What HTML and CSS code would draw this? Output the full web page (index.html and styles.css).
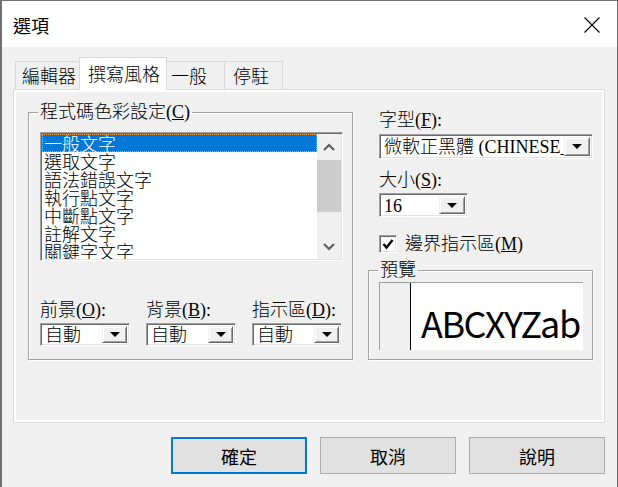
FILE: index.html
```html
<!DOCTYPE html>
<html lang="zh-Hant">
<head>
<meta charset="utf-8">
<title>選項</title>
<link rel="stylesheet" href="styles.css">
</head>
<body>
<div class="window">
  <div class="titlebar">
    <span class="title">選項</span>
    <svg class="close" width="16" height="16" viewBox="0 0 16 16"><path d="M0.5 0.5 L15.5 15.5 M15.5 0.5 L0.5 15.5" stroke="#000" stroke-width="1.1" fill="none"/></svg>
  </div>
  <div class="content">
    <div class="tabbar">
      <div class="tab t1">編輯器</div>
      <div class="tab t2 selected">撰寫風格</div>
      <div class="tab t3">一般</div>
      <div class="tab t4">停駐</div>
    </div>
    <div class="panel">
      <fieldset class="group colors">
        <legend>程式碼色彩設定(<u>C</u>)</legend>
        <div class="listbox">
          <ul class="items">
            <li class="sel">一般文字</li>
            <li>選取文字</li>
            <li>語法錯誤文字</li>
            <li>執行點文字</li>
            <li>中斷點文字</li>
            <li>註解文字</li>
            <li>關鍵字文字</li>
          </ul>
          <div class="vscroll">
            <div class="sbtn"><svg width="12" height="8" viewBox="0 0 12 8"><path d="M1 7 L6 2 L11 7" stroke="#606060" stroke-width="2.2" fill="none"/></svg></div>
            <div class="thumb"></div>
            <div class="track"></div>
            <div class="sbtn"><svg width="12" height="8" viewBox="0 0 12 8"><path d="M1 1 L6 6 L11 1" stroke="#606060" stroke-width="2.2" fill="none"/></svg></div>
          </div>
        </div>
        <div class="pickers">
          <div class="picker">
            <div class="lbl">前景(<u>O</u>):</div>
            <div class="combo small"><span class="val">自動</span><span class="dbtn"><i class="tri"></i></span></div>
          </div>
          <div class="picker">
            <div class="lbl">背景(<u>B</u>):</div>
            <div class="combo small"><span class="val">自動</span><span class="dbtn"><i class="tri"></i></span></div>
          </div>
          <div class="picker">
            <div class="lbl">指示區(<u>D</u>):</div>
            <div class="combo small"><span class="val">自動</span><span class="dbtn"><i class="tri"></i></span></div>
          </div>
        </div>
      </fieldset>
      <div class="rightcol">
        <div class="lbl r-font">字型(<u>F</u>):</div>
        <div class="combo font"><span class="val">微軟正黑體 (CHINESE_BIG5)</span><span class="dbtn"><i class="tri"></i></span></div>
        <div class="lbl r-size">大小(<u>S</u>):</div>
        <div class="combo size"><span class="val">16</span><span class="dbtn"><i class="tri"></i></span></div>
        <label class="check">
          <span class="box"><svg width="14" height="14" viewBox="0 0 14 14"><path d="M2.5 7 L5.5 10.5 L11.5 3" stroke="#000" stroke-width="2.4" fill="none"/></svg></span>
          <span>邊界指示區(<u>M</u>)</span>
        </label>
        <fieldset class="group preview">
          <legend>預覽</legend>
          <div class="pv">
            <div class="gutter"></div>
            <div class="sample">ABCXYZab</div>
          </div>
        </fieldset>
      </div>
    </div>
    <div class="buttons">
      <button class="btn default">確定</button>
      <button class="btn">取消</button>
      <button class="btn">說明</button>
    </div>
  </div>
</div>
</body>
</html>
```
FILE: styles.css
```css
html, body {
  margin: 0;
  padding: 0;
  background: #f0f0f0;
  overflow: hidden;
}
.window {
  box-sizing: border-box;
  width: 618px;
  height: 492px;
  border: 1px solid #707070;
  border-left-width: 2px;
  background: #f0f0f0;
  font-family: "Liberation Serif", "Noto Sans CJK TC", serif;
  font-size: 18px;
  font-weight: 300;
  color: #000;
}
.titlebar {
  height: 46px;
  background: #fff;
  display: flex;
  align-items: center;
  justify-content: space-between;
  padding: 0 17px 0 11px;
}
.title {
  font-family: "Noto Sans CJK TC", sans-serif;
  font-size: 18px;
  line-height: 20px;
  margin-top: 1px;
  font-weight: 400;
}
.close { display: block; margin-top: 1px; }

.content {
  padding: 10px 12px 0 11px;
}
.tabbar {
  height: 32px;
  display: flex;
  align-items: flex-end;
  padding-left: 2px;
}
.tab {
  box-sizing: border-box;
  height: 28px;
  border: 1px solid #d9d9d9;
  border-bottom: none;
  background: #f0f0f0;
  font-family: "Noto Sans CJK TC", sans-serif;
  line-height: 26px;
  font-size: 18px;
  white-space: nowrap;
}
.t1 { width: 65px; padding-left: 6px; }
.t2 { width: 88px; margin-left: -1px; padding-left: 8px; }
.t3 { width: 59px; margin-left: -1px; padding-left: 4px; }
.t4 { width: 59px; margin-left: -1px; padding-left: 8px; }
.tab.selected {
  height: 33px;
  margin-bottom: -1px;
  background: #fff;
  position: relative;
  z-index: 1;
  line-height: 30px;
}
.panel {
  box-sizing: border-box;
  height: 334px;
  border: 1px solid #d9d9d9;
  box-shadow: inset 0 0 0 2px #fff;
  display: flex;
  align-items: flex-start;
  padding: 12px 0 0 14px;
}

.group {
  margin: 0;
  border: 1px solid #a0a0a0;
  box-shadow: inset 1px 1px 0 #fff, 1px 1px 0 #fff;
  min-width: 0;
}
.group legend {
  padding: 0 2px;
  line-height: 20px;
  height: 20px;
  color: #000;
}
.colors legend { margin-left: -2px; }
.preview legend { margin-left: -1px; }
.colors {
  box-sizing: border-box;
  width: 325px;
  padding: 10px 10px 13px 11px;
}
.listbox {
  box-sizing: border-box;
  width: 303px;
  height: 129px;
  display: flex;
  background: #fff;
  border: 1px solid;
  border-color: #a0a0a0 #fff #fff #a0a0a0;
  box-shadow: inset 1px 1px 0 #696969, inset -1px -1px 0 #e3e3e3;
  padding: 1px;
}
.items {
  list-style: none;
  margin: 0;
  padding: 0;
  flex: 1;
  overflow: hidden;
  font-family: "Noto Sans CJK TC", sans-serif;
}
.items li {
  height: 18px;
  line-height: 18px;
  padding-left: 2px;
  white-space: nowrap;
}
.items li.sel {
  background: #0078d7;
  color: #fff;
  outline: 1px dotted #f7a04a;
  outline-offset: -1px;
}
.vscroll {
  width: 24px;
  display: flex;
  flex-direction: column;
  background: #f0f0f0;
}
.sbtn {
  height: 25px;
  display: flex;
  align-items: center;
  justify-content: center;
}
.thumb {
  height: 52px;
  background: #cdcdcd;
  margin-top: 1px;
}
.track { flex: 1; }

.pickers {
  display: grid;
  grid-template-columns: 90px 90px 91px;
  column-gap: 16px;
  margin-top: 39px;
}
.lbl {
  line-height: 20px;
  height: 20px;
  white-space: nowrap;
}
.picker .combo { margin-top: 3px; }

.combo {
  box-sizing: border-box;
  display: flex;
  align-items: stretch;
  background: #fff;
  border: 1px solid;
  border-color: #a0a0a0 #fff #fff #a0a0a0;
  box-shadow: inset 1px 1px 0 #696969, inset -1px -1px 0 #e3e3e3;
  padding: 2px;
  overflow: hidden;
}
.combo .val {
  flex: 1;
  min-width: 0;
  overflow: hidden;
  white-space: nowrap;
  padding-left: 2px;
  line-height: 19px;
}
.combo.small { width: 90px; height: 23px; }
.combo.small .dbtn { width: 25px; }
.dbtn {
  box-sizing: border-box;
  flex: none;
  width: 26px;
  background: #f0f0f0;
  border: 1px solid;
  border-color: #f0f0f0 #696969 #696969 #f0f0f0;
  box-shadow: inset 1px 1px 0 #fff, inset -1px -1px 0 #a0a0a0;
  display: flex;
  align-items: center;
  justify-content: center;
}
.tri {
  display: block;
  width: 0;
  height: 0;
  border-left: 5px solid transparent;
  border-right: 5px solid transparent;
  border-top: 5px solid #000;
}

.rightcol {
  width: 225px;
  margin-left: 15px;
  display: flex;
  flex-direction: column;
}
.rightcol > .lbl,
.rightcol > .combo,
.rightcol > .check { margin-left: 11px; }
.r-font { margin-top: 8px; }
.combo.font { width: 214px; height: 25px; margin-top: 4px; }
.combo.font .val { line-height: 21px; }
.r-size { margin-top: 11px; }
.combo.size { width: 89px; height: 24px; margin-top: 3px; }
.combo.size .val { line-height: 20px; }

.check {
  margin-top: 17px;
  height: 20px;
  display: flex;
  align-items: center;
  gap: 8px;
  line-height: 20px;
}
.check .box {
  box-sizing: border-box;
  width: 18px;
  height: 18px;
  background: #fff;
  border: 1px solid;
  border-color: #a0a0a0 #fff #fff #a0a0a0;
  box-shadow: inset 1px 1px 0 #696969, inset -1px -1px 0 #e3e3e3;
  display: flex;
  align-items: center;
  justify-content: center;
}

.preview {
  box-sizing: border-box;
  margin-top: 6px;
  width: 225px;
  height: 100px;
  padding: 2px 9px 9px 10px;
}
.pv {
  height: 68px;
  display: flex;
  border-top: 1px solid #a0a0a0;
  border-left: 1px solid #a0a0a0;
  box-sizing: border-box;
  overflow: hidden;
}
.gutter {
  width: 30px;
  flex: none;
  border-right: 1px solid #000;
  background: #f0f0f0;
}
.sample {
  flex: 1;
  background: #fff;
  font-family: "Noto Sans CJK TC", sans-serif;
  font-weight: 400;
  font-size: 36px;
  line-height: 36px;
  letter-spacing: -1.5px;
  padding: 21px 0 0 10px;
  white-space: nowrap;
  overflow: hidden;
}

.buttons {
  display: flex;
  justify-content: flex-end;
  gap: 13px;
  margin-top: 14px;
}
.btn {
  box-sizing: border-box;
  width: 136px;
  height: 37px;
  background: #e1e1e1;
  border: 1px solid #adadad;
  font-family: "Noto Sans CJK TC", sans-serif;
  font-size: 18px;
  font-weight: 400;
  color: #000;
  padding: 0;
  line-height: 20px;
}
.btn.default {
  border: 2px solid #0078d7;
}
```
